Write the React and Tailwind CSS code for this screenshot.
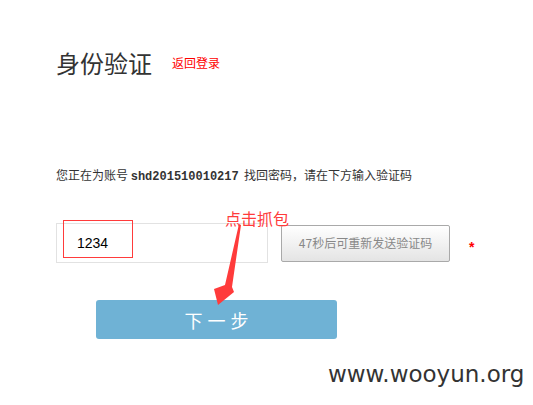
import React from 'react';

const cjk = { fontFamily: '"Noto Sans CJK SC", "Liberation Sans", sans-serif' };

export default function App() {
  return (
    <div className="relative w-[533px] h-[405px] bg-white overflow-hidden" style={cjk}>
      <div className="pt-[51px] pl-[56px]">
        {/* Header */}
        <div className="flex items-center h-[24px]">
          <h1 className="text-[24px] leading-[24px] text-[#333] font-normal">身份验证</h1>
          <a className="ml-[20px] text-[12px] leading-[12px] text-[#ff0000]">返回登录</a>
        </div>

        {/* Info line */}
        <p className="mt-[94px] text-[12px] leading-[12px] text-[#333]">
          您正在为账号&nbsp;
          <b className="font-bold text-[12px]" style={{ fontFamily: '"Liberation Mono", monospace' }}>shd201510010217</b>&nbsp;
          找回密码，请在下方输入验证码
        </p>

        {/* Code input row */}
        <div className="mt-[40px] flex items-center h-[40px]">
          <div className="relative w-[212px] h-[40px] border border-[#e2e2e2] flex items-center pl-[20px]">
            <span className="text-[14px] text-black" style={{ fontFamily: '"Liberation Sans", sans-serif' }}>1234</span>
            <div className="absolute left-[6px] top-[-4px] w-[70px] h-[38px] border border-[#ff3b3b]"></div>
          </div>
          <button className="ml-[13px] w-[169px] h-[37px] rounded-[2px] border border-[#a9a9a9] bg-gradient-to-b from-white to-[#e4e4e4] text-[12px] text-[#888]">
            47秒后可重新发送验证码
          </button>
          <span
            className="ml-[19px] mt-[7px] text-[14px] leading-[14px] font-bold text-[#ff0000]"
            style={{ fontFamily: '"Liberation Sans", sans-serif' }}
          >
            *
          </span>
        </div>

        {/* Next */}
        <button className="mt-[37px] ml-[40px] w-[241px] h-[39px] rounded-[3px] bg-[#6fb2d5] text-white text-[18px] leading-[18px] flex items-center justify-center gap-[5px]">
          <span>下</span>
          <span>一</span>
          <span>步</span>
        </button>
      </div>

      {/* Annotation */}
      <span className="absolute left-[225px] top-[209px] text-[16px] leading-[18px] text-[#ff3b3b]">点击抓包</span>
      <svg className="absolute left-0 top-0 pointer-events-none" width="533" height="405">
        <polygon points="239,224 241,225 232,287 234,292 218,305 214,289 225,285" fill="#ff3b3b" />
      </svg>

      {/* Watermark */}
      <div
        className="absolute left-[328px] top-[361px] text-[23px] leading-[26px] text-[#333]"
        style={{ fontFamily: '"DejaVu Sans", sans-serif' }}
      >
        www.wooyun.org
      </div>
    </div>
  );
}
